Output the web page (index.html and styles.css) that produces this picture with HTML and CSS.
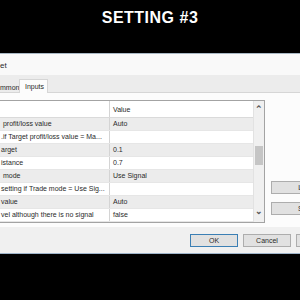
FILE: index.html
```html
<!DOCTYPE html>
<html lang="en">
<head>
    <meta charset="UTF-8">
    <title>Setting #3</title>
    <link rel="stylesheet" href="styles.css">
</head>
<body>
    <div class="banner">SETTING #3</div>

    <div class="dialog">
        <div class="titlebar">et</div>

        <div class="tabs">
            <div class="tab">mmon</div>
            <div class="tab active">Inputs</div>
        </div>

        <div class="panel">
            <div class="grid">
                <div class="rows">
                    <div class="row head"><span class="name"></span><span class="val">Value</span></div>
                    <div class="row odd"><span class="name">&nbsp;profit/loss value</span><span class="val">Auto</span></div>
                    <div class="row"><span class="name">.if Target profit/loss value = Ma...</span><span class="val"></span></div>
                    <div class="row odd"><span class="name">arget</span><span class="val">0.1</span></div>
                    <div class="row"><span class="name">istance</span><span class="val">0.7</span></div>
                    <div class="row odd"><span class="name">&nbsp;mode</span><span class="val">Use Signal</span></div>
                    <div class="row"><span class="name">setting if Trade mode = Use Sig...</span><span class="val"></span></div>
                    <div class="row odd"><span class="name">value</span><span class="val">Auto</span></div>
                    <div class="row"><span class="name">vel although there is no signal</span><span class="val">false</span></div>
                </div>
                <div class="scrollbar">
                    <span class="arrow">&#8963;</span>
                    <span class="thumb"></span>
                    <span class="arrow down">&#8964;</span>
                </div>
            </div>

            <div class="side">
                <button class="btn side-btn">Load</button>
                <button class="btn side-btn">Save</button>
            </div>
        </div>

        <div class="footer">
            <button class="btn default">OK</button>
            <button class="btn">Cancel</button>
            <button class="btn last"></button>
        </div>
    </div>
</body>
</html>
```

FILE: styles.css
```css
* {
    margin: 0;
    padding: 0;
    box-sizing: border-box;
}

body {
    width: 300px;
    height: 300px;
    overflow: hidden;
    background: #000;
    font-family: 'Liberation Sans', Arial, sans-serif;
    font-size: 7px;
    color: #2a2a2a;
}

.banner {
    height: 53px;
    padding-top: 10px;
    text-align: center;
    color: #fff;
    font-size: 16px;
    font-weight: bold;
    letter-spacing: 0.5px;
    line-height: 16px;
}

.dialog {
    height: 201px;
    display: flex;
    flex-direction: column;
    background: #f0f0f0;
    border-top: 1px solid #a9b8c4;
    border-bottom: 1px solid #9fb4c9;
    overflow: hidden;
}

.titlebar {
    height: 21px;
    background: #f9f9f9;
    font-size: 8px;
    line-height: 24px;
}

.tabs {
    height: 18px;
    display: flex;
    align-items: flex-end;
    gap: 2px;
    background: #ececec;
    border-bottom: 1px solid #d6d6d6;
}

.tab {
    height: 11px;
    width: 17px;
    margin-bottom: -1px;
    line-height: 11px;
}

.tab.active {
    height: 14px;
    width: 29px;
    padding: 0 5px;
    line-height: 13px;
    background: #fcfcfc;
    border: 1px solid #d6d6d6;
    border-bottom: none;
}

.panel {
    height: 134px;
    display: flex;
    background: #fcfcfc;
    padding-top: 7px;
}

.grid {
    width: 267px;
    height: 123px;
    margin-left: -2px;
    display: flex;
    border: 1px solid #a3a3a3;
    background: #fff;
}

.rows {
    flex: 1;
}

.row {
    height: 13px;
    display: flex;
    border-bottom: 1px solid #e6e6e6;
    line-height: 12px;
    white-space: nowrap;
}

.row.odd {
    background: #ececec;
}

.row.head {
    height: 17px;
    line-height: 17px;
    background: #fff;
    border-bottom: 1px solid #dadada;
}

.name {
    width: 111px;
    padding-left: 2px;
    overflow: hidden;
    border-right: 1px solid #d4d4d4;
}

.val {
    flex: 1;
    padding-left: 3px;
}

.scrollbar {
    width: 11px;
    display: flex;
    flex-direction: column;
    align-items: center;
    background: #f0f0f0;
    border-left: 1px solid #e2e2e2;
}

.arrow {
    height: 14px;
    font-size: 9px;
    line-height: 16px;
    font-weight: bold;
    color: #555;
}

.arrow.down {
    margin-top: auto;
    line-height: 6px;
}

.thumb {
    width: 8px;
    height: 19px;
    margin-top: 31px;
    background: #c5c5c5;
}

.side {
    flex: 1;
    display: flex;
    flex-direction: column;
    gap: 8px;
    padding: 81px 0 0 6px;
    overflow: hidden;
}

.btn {
    width: 48px;
    height: 13px;
    flex-shrink: 0;
    font-family: 'Liberation Sans', Arial, sans-serif;
    font-size: 7px;
    color: #2a2a2a;
    background: #e1e1e1;
    border: 1px solid #adadad;
}

.side-btn {
    width: 70px;
}

.footer {
    flex: 1;
    display: flex;
    justify-content: flex-end;
    align-items: flex-start;
    gap: 5px;
    padding-top: 7px;
    overflow: hidden;
}

.btn.default {
    border-color: #3b7fb4;
}

.btn.last {
    margin-right: -44px;
}
```
